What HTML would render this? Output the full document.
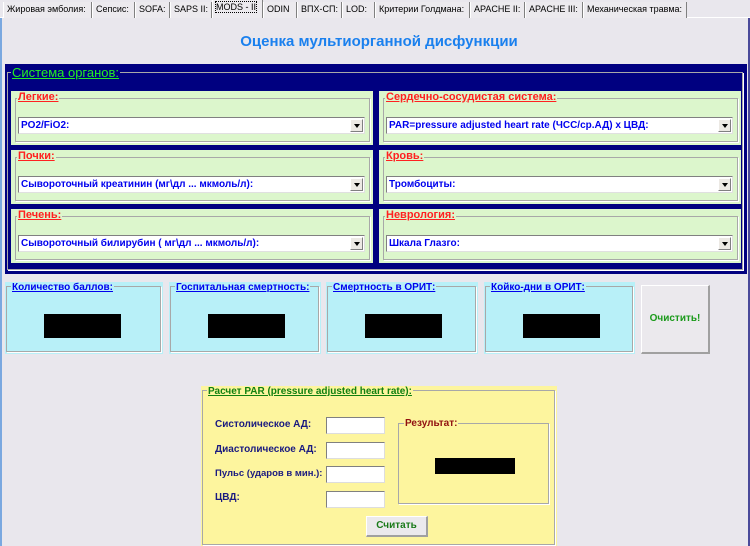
<!DOCTYPE html>
<html><head><meta charset="utf-8"><style>
*{margin:0;padding:0;box-sizing:border-box}
body{width:750px;height:546px;background:#e9e7ed;font-family:"Liberation Sans","DejaVu Sans",sans-serif;position:relative;overflow:hidden}
.a{position:absolute}
.tab{position:absolute;top:2px;height:16px;font-size:9px;color:#000;line-height:15px;padding-left:3px;border-right:1px solid #808080;border-left:1px solid #fff;background:#eceaee;white-space:nowrap;overflow:hidden}
.fs{position:absolute;border:1px solid #a8a8a8;box-shadow:1px 1px 0 #fff}
.lg{position:absolute;font-weight:bold;text-decoration:underline;white-space:nowrap;padding:0 1px}
.g{position:absolute;background:#dcf6cc}
.sel{position:absolute;height:17px;background:#fff;border:1px solid #808080;border-right-color:#e0e0e0;border-bottom-color:#e0e0e0;font-size:10px;font-weight:bold;color:#0000ee;line-height:15px;padding-left:2px;white-space:nowrap;overflow:hidden}
.sel i{position:absolute;right:1px;top:1px;width:13px;height:13px;background:#ece9e4;border:1px solid #fff;border-right-color:#808080;border-bottom-color:#808080}
.sel i:after{content:"";position:absolute;left:3px;top:4px;border:3px solid transparent;border-top:4px solid #000}
.c{position:absolute;background:#b8f0f8;top:282px;height:72px}
.blk{position:absolute;background:#000;width:77px;height:24px;top:32px}
.in{position:absolute;background:#fff;border:1px solid #808080;border-right-color:#ddd;border-bottom-color:#ddd;width:59px;height:17px;left:326px}
.lb{position:absolute;left:215px;font-size:10px;font-weight:bold;color:#1a1a80}
</style></head><body>
<div class="a" style="left:0;top:18px;width:2px;height:528px;background:#7aa8e0"></div>
<div class="a" style="left:748px;top:18px;width:2px;height:528px;background:#4a4a9a"></div>
<div class="a" style="left:0;top:17px;width:750px;height:1px;background:#fff"></div>
<div class="tab" style="left:3px;width:89px">Жировая эмболия:</div>
<div class="tab" style="left:92px;width:43px">Сепсис:</div>
<div class="tab" style="left:135px;width:35px">SOFA:</div>
<div class="tab" style="left:170px;width:42px">SAPS II:</div>
<div class="tab" style="left:212px;width:51px;top:0;height:18px"><span style="outline:1px dotted #000">MODS - II</span></div>
<div class="tab" style="left:263px;width:34px">ODIN</div>
<div class="tab" style="left:297px;width:45px">ВПХ-СП:</div>
<div class="tab" style="left:342px;width:33px">LOD:</div>
<div class="tab" style="left:375px;width:95px">Критерии Голдмана:</div>
<div class="tab" style="left:470px;width:55px">APACHE II:</div>
<div class="tab" style="left:525px;width:58px">APACHE III:</div>
<div class="tab" style="left:583px;width:104px">Механическая травма:</div>

<div class="a" style="left:0;top:33px;width:750px;text-align:center;font-size:15px;font-weight:bold;color:#1a80ee;padding-left:8px">Оценка мультиорганной дисфункции</div>

<div class="a" style="left:5px;top:64px;width:742px;height:210px;background:#000080"></div>
<div class="fs" style="left:7px;top:72px;width:736px;height:198px"></div>
<div class="lg" style="left:11px;top:65px;font-size:13px;font-weight:normal;color:#22ee22;background:#000080">Система органов:</div>

<div class="g" style="left:11px;top:91px;width:362px;height:54px"></div>
<div class="fs" style="left:15px;top:98px;width:355px;height:44px"></div>
<div class="lg" style="left:17px;top:91px;font-size:11px;color:#ff2020;background:#dcf6cc">Легкие:</div>
<div class="sel" style="left:18px;top:117px;width:347px">PO2/FiO2:<i></i></div>

<div class="g" style="left:379px;top:91px;width:362px;height:54px"></div>
<div class="fs" style="left:383px;top:98px;width:355px;height:44px"></div>
<div class="lg" style="left:385px;top:91px;font-size:11px;color:#ff2020;background:#dcf6cc">Сердечно-сосудистая система:</div>
<div class="sel" style="left:386px;top:117px;width:347px">PAR=pressure adjusted heart rate (ЧСС/ср.АД) x ЦВД:<i></i></div>

<div class="g" style="left:11px;top:150px;width:362px;height:54px"></div>
<div class="fs" style="left:15px;top:157px;width:355px;height:44px"></div>
<div class="lg" style="left:17px;top:150px;font-size:11px;color:#ff2020;background:#dcf6cc">Почки:</div>
<div class="sel" style="left:18px;top:176px;width:347px">Сывороточный креатинин (мг\дл ... мкмоль/л):<i></i></div>

<div class="g" style="left:379px;top:150px;width:362px;height:54px"></div>
<div class="fs" style="left:383px;top:157px;width:355px;height:44px"></div>
<div class="lg" style="left:385px;top:150px;font-size:11px;color:#ff2020;background:#dcf6cc">Кровь:</div>
<div class="sel" style="left:386px;top:176px;width:347px">Тромбоциты:<i></i></div>

<div class="g" style="left:11px;top:209px;width:362px;height:54px"></div>
<div class="fs" style="left:15px;top:216px;width:355px;height:44px"></div>
<div class="lg" style="left:17px;top:209px;font-size:11px;color:#ff2020;background:#dcf6cc">Печень:</div>
<div class="sel" style="left:18px;top:235px;width:347px">Сывороточный билирубин ( мг\дл ... мкмоль/л):<i></i></div>

<div class="g" style="left:379px;top:209px;width:362px;height:54px"></div>
<div class="fs" style="left:383px;top:216px;width:355px;height:44px"></div>
<div class="lg" style="left:385px;top:209px;font-size:11px;color:#ff2020;background:#dcf6cc">Неврология:</div>
<div class="sel" style="left:386px;top:235px;width:347px">Шкала Глазго:<i></i></div>

<div class="c" style="left:5px;width:158px"><div class="fs" style="left:1px;top:4px;width:155px;height:66px"></div><div class="lg" style="left:6px;top:0;font-size:10px;color:#0000ee;background:#b8f0f8">Количество баллов:</div><div class="blk" style="left:39px"></div></div>
<div class="c" style="left:169px;width:152px"><div class="fs" style="left:1px;top:4px;width:149px;height:66px"></div><div class="lg" style="left:6px;top:0;font-size:10px;color:#0000ee;background:#b8f0f8">Госпитальная смертность:</div><div class="blk" style="left:39px"></div></div>
<div class="c" style="left:326px;width:152px"><div class="fs" style="left:1px;top:4px;width:149px;height:66px"></div><div class="lg" style="left:6px;top:0;font-size:10px;color:#0000ee;background:#b8f0f8">Смертность в ОРИТ:</div><div class="blk" style="left:39px"></div></div>
<div class="c" style="left:484px;width:151px"><div class="fs" style="left:1px;top:4px;width:148px;height:66px"></div><div class="lg" style="left:6px;top:0;font-size:10px;color:#0000ee;background:#b8f0f8">Койко-дни в ОРИТ:</div><div class="blk" style="left:39px"></div></div>
<div class="a" style="left:641px;top:285px;width:69px;height:69px;background:#ebe9ed;border:1px solid #fff;border-right:2px solid #a0a0a0;border-bottom:2px solid #a0a0a0;font-size:10px;font-weight:bold;color:#1a9a1a;text-align:center;line-height:66px">Очистить!</div>

<div class="a" style="left:201px;top:386px;width:356px;height:160px;background:#fdf59e"></div>
<div class="fs" style="left:202px;top:390px;width:353px;height:155px"></div>
<div class="lg" style="left:207px;top:386px;font-size:10px;color:#108010;background:#fdf59e">Расчет PAR (pressure adjusted heart rate):</div>
<div class="lb" style="top:419px">Систолическое АД:</div>
<div class="lb" style="top:444px">Диастолическое АД:</div>
<div class="lb" style="top:468px;font-size:9.5px">Пульс (ударов в мин.):</div>
<div class="lb" style="top:492px">ЦВД:</div>
<div class="in" style="top:417px"></div>
<div class="in" style="top:442px"></div>
<div class="in" style="top:466px"></div>
<div class="in" style="top:491px"></div>
<div class="fs" style="left:398px;top:423px;width:151px;height:81px"></div>
<div class="lg" style="left:404px;top:418px;font-size:10px;color:#901010;background:#fdf59e;text-decoration:none">Результат:</div>
<div class="a" style="left:435px;top:458px;width:80px;height:16px;background:#000"></div>
<div class="a" style="left:366px;top:516px;width:62px;height:21px;background:#ebe9ed;border:1px solid #fff;border-right:2px solid #a0a0a0;border-bottom:2px solid #a0a0a0;font-size:10px;font-weight:bold;color:#1a7a1a;text-align:center;line-height:18px">Считать</div>
</body></html>
